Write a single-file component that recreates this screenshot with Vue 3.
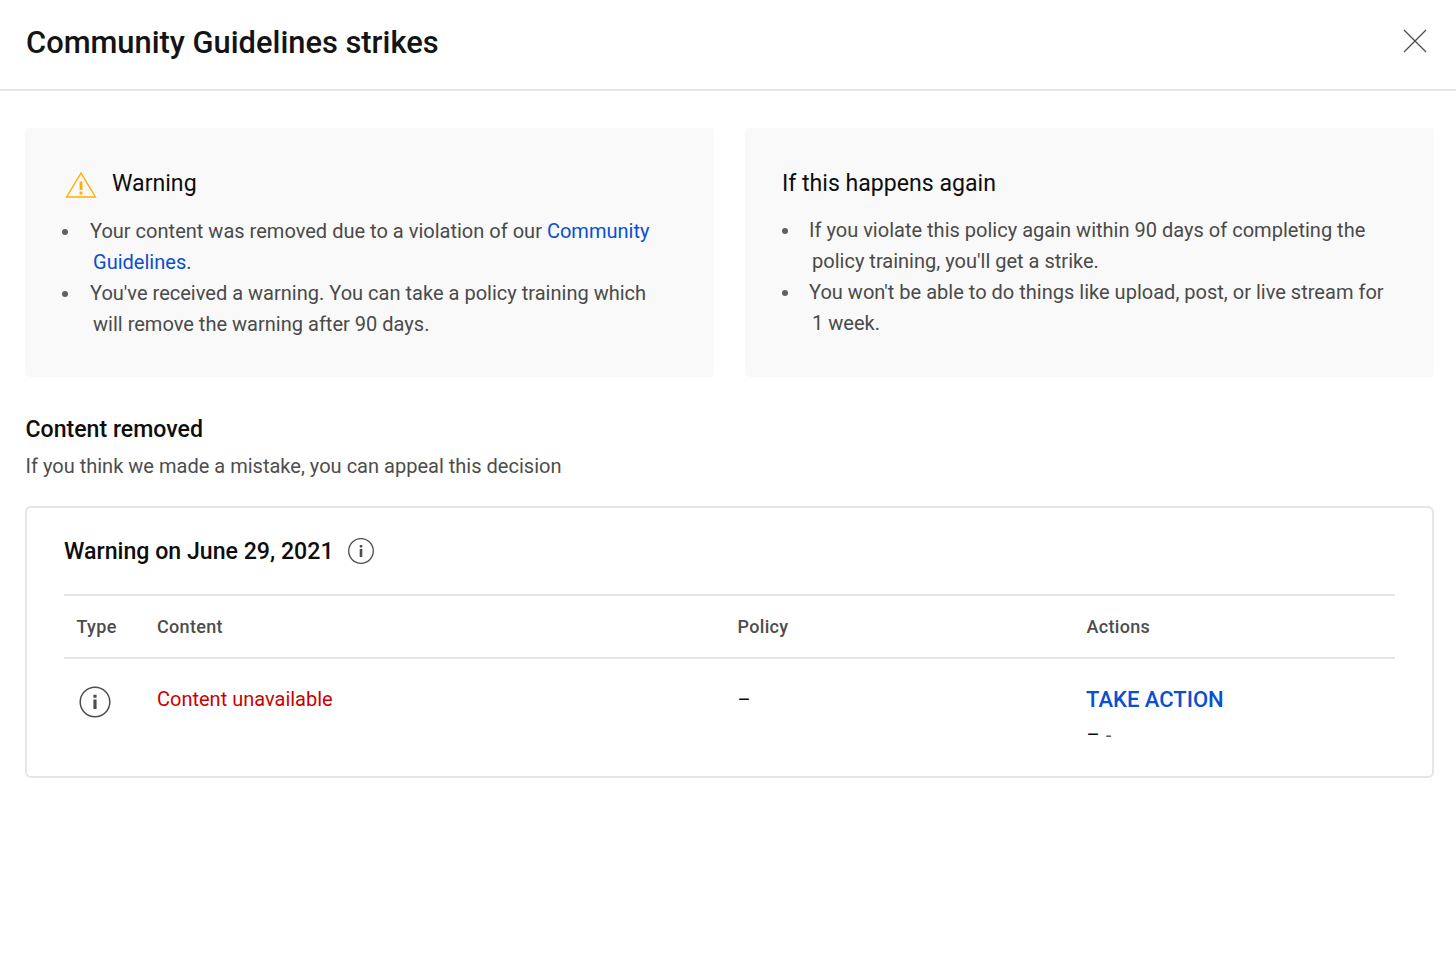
<template>
  <div class="page">
    <header class="top">
      <h1>Community Guidelines strikes</h1>
      <svg class="close" width="24" height="24" viewBox="0 0 24 24" aria-label="Close"><path d="M1 1 23 23M23 1 1 23" fill="none" stroke="#4d4d4d" stroke-width="1.3"/></svg>
    </header>
    <main class="body">
      <div class="panels">
        <section class="panel left">
          <div class="head">
            <svg class="warn" width="32" height="27" viewBox="0 0 32 27"><path d="M16 2.2 1.6 26h28.8Z" fill="none" stroke="#ffb000" stroke-width="1.4"/><path d="M14.6 10.500h2.800v8.500h-2.800zM14.600 20.500h2.800v3h-2.800z" fill="#ffb000"/></svg>
            <h2>Warning</h2>
          </div>
          <ul>
            <li>Your content was removed due to a violation of our <a>Community Guidelines</a>.</li>
            <li>You've received a warning. You can take a policy training which will remove the warning after 90 days.</li>
          </ul>
        </section>
        <section class="panel right">
          <h2>If this happens again</h2>
          <ul>
            <li>If you violate this policy again within 90 days of completing the policy training, you'll get a strike.</li>
            <li>You won't be able to do things like upload, post, or live stream for 1 week.</li>
          </ul>
        </section>
      </div>
      <h3>Content removed</h3>
      <p class="sub">If you think we made a mistake, you can appeal this decision</p>
      <section class="card">
        <div class="card-title">
          <span>Warning on June 29, 2021</span>
          <svg width="26" height="26" viewBox="0 0 26 26"><circle cx="13" cy="13" r="12.300" fill="none" stroke="#4d4d4d" stroke-width="1.300"/><path d="M11.700 11h2.600v8h-2.600zM11.700 7h2.600v2.600h-2.600z" fill="#4d4d4d"/></svg>
        </div>
        <div class="row labels">
          <span>Type</span><span>Content</span><span>Policy</span><span>Actions</span>
        </div>
        <div class="row data">
          <span class="type"><svg width="32" height="32" viewBox="0 0 32 32"><circle cx="16" cy="16" r="14.800" fill="none" stroke="#4d4d4d" stroke-width="1.500"/><path d="M14.400 13.500h3.200v9.500h-3.200zM14.400 8.800h3.200v3h-3.200z" fill="#4d4d4d"/></svg></span>
          <span class="red">Content unavailable</span>
          <span class="dash">–</span>
          <div class="acts">
            <a class="take">TAKE ACTION</a>
            <div class="dashes"><b>–</b><i>-</i></div>
          </div>
        </div>
      </section>
    </main>
  </div>
</template>

<script setup>
</script>

<style>
html, body { background: #fff; }
</style>

<style scoped>
.page { width: 1456px; height: 980px; overflow: hidden; font-family: Roboto, "Liberation Sans", sans-serif; color: #0d0d0d; background: #fff; }
.top { height: 89px; border-bottom: 2px solid #e5e5e5; padding: 0 29px 0 26px; display: flex; align-items: center; justify-content: space-between; }
h1 { margin: 0 0 3px; font-size: 30.850px; line-height: 38px; font-weight: 500; color: #141414; }
.close { margin-bottom: 7px; }
.body { padding: 37px 22px 0 25px; }
.panels { display: grid; grid-template-columns: 689px 689px; gap: 31px; }
.panel { height: 249px; box-sizing: border-box; background: #f9f9f9; border-radius: 4px; }
.left { padding: 39px 40px 0 41px; }
.right { padding: 40px 40px 0 37px; }
.head { display: flex; align-items: flex-start; gap: 15px; height: 32px; }
.head h2 { margin-top: 1px; }
.warn { margin-top: 4px; margin-left: -1px; }
h2 { margin: 0; font-size: 23.100px; line-height: 32px; font-weight: 400; color: #0d0d0d; }
ul { margin: 17px 0 0; padding: 0; list-style: none; }
.right ul { margin-top: 15px; }
li { position: relative; padding-left: 27px; text-indent: -3px; font-size: 20.040px; line-height: 31px; color: #4a4a4a; }
li::before { content: ""; position: absolute; left: -4px; top: 13px; width: 6px; height: 6px; border-radius: 50%; background: #606060; text-indent: 0; }
.right li { padding-left: 30px; }
.right li::before { left: 0; }
li a { color: #0b4fd0; }
h3 { margin: 37px 0 0 0.500px; font-size: 23.100px; line-height: 32px; font-weight: 500; color: #0d0d0d; }
.sub { margin: 5px 0 0 0.500px; font-size: 20.040px; line-height: 30px; color: #4d4d4d; }
.card { margin-top: 25px; height: 272px; box-sizing: border-box; border: 2px solid #e5e5e5; border-radius: 6px; padding: 0 37px; }
.card-title { height: 86px; display: flex; align-items: center; gap: 14px; border-bottom: 2px solid #e5e5e5; font-size: 23.150px; font-weight: 500; color: #0d0d0d; }
.row { display: grid; grid-template-columns: 93px 580.500px 349px 1fr; }
.labels { height: 61px; align-items: center; border-bottom: 2px solid #e5e5e5; font-size: 18px; letter-spacing: 0.320px; font-weight: 500; color: #4d4d4d; }
.labels span:first-child { padding-left: 12.500px; }
.data { padding-top: 23px; font-size: 20px; line-height: 35px; }
.type { padding-left: 15px; height: 36px; display: flex; align-items: flex-start; padding-top: 4px; }
.red { color: #cc0000; }
.dash { color: #0d0d0d; padding-top: 1px; }
.take { display: block; font-size: 22px; font-weight: 500; color: #0b50d0; margin-left: -0.500px; }
.dashes { display: flex; gap: 6px; margin-top: 1px; }
.dashes b { font-weight: 400; color: #0d0d0d; }
.dashes i { font-style: normal; color: #606060; }
</style>
